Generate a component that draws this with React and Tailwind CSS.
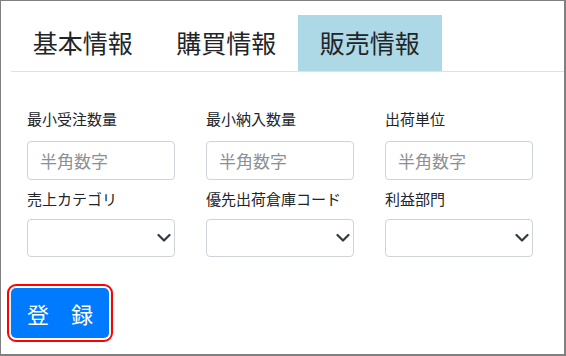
import React from "react";

const font = { fontFamily: '"Noto Sans CJK JP", "Noto Sans", sans-serif' };

function Chevron() {
  return (
    <svg
      className="pointer-events-none absolute right-[4px] top-1/2 -translate-y-1/2"
      width="14"
      height="9"
      viewBox="0 0 14 9"
      fill="none"
    >
      <path d="M1.5 1.5 L7 7 L12.5 1.5" stroke="#343a40" strokeWidth="2.2" strokeLinecap="round" strokeLinejoin="round" />
    </svg>
  );
}

function TextField({ label }) {
  return (
    <div className="flex flex-col">
      <label className="h-[22px] text-[15px] leading-[22px] text-[#212529]">{label}</label>
      <input
        type="text"
        placeholder="半角数字"
        className="mt-[11px] h-[39px] w-[148px] rounded-[4px] border border-[#ced4da] bg-white pl-[12px] text-[17px] text-[#212529] outline-none placeholder:text-[#8a9096]"
        style={font}
      />
    </div>
  );
}

function SelectField({ label }) {
  return (
    <div className="flex flex-col">
      <label className="h-[22px] text-[15px] leading-[22px] text-[#212529]">{label}</label>
      <div className="relative mt-[9px] h-[38px] w-[148px]">
        <select
          className="h-full w-full appearance-none rounded-[4px] border border-[#ced4da] bg-white text-[16px] outline-none"
          style={font}
        >
          <option value=""></option>
        </select>
        <Chevron />
      </div>
    </div>
  );
}

export default function App() {
  const tabs = ["基本情報", "購買情報", "販売情報"];
  return (
    <div
      className="box-border h-[356px] w-[566px] overflow-hidden border-t border-l border-r-2 border-b-2 border-[#808080] bg-white pl-[10px] pt-[14px]"
      style={font}
    >
      <div className="flex h-[57px] border-b border-[#dee2e6]">
        {tabs.map((t, i) => (
          <div
            key={t}
            className={
              "flex h-[56px] w-[143.5px] items-center justify-center text-[25px] text-[#212529] " +
              (i === 2 ? "bg-[#add8e6]" : "")
            }
          >
            {t}
          </div>
        ))}
      </div>

      <div className="pl-[16px] pt-[36px]">
        <div className="grid grid-cols-[148px_148px_148px] gap-x-[31px] gap-y-[8px]">
          <TextField label="最小受注数量" />
          <TextField label="最小納入数量" />
          <TextField label="出荷単位" />
          <SelectField label="売上カテゴリ" />
          <SelectField label="優先出荷倉庫コード" />
          <SelectField label="利益部門" />
        </div>
      </div>

      <div className="pt-[31px]">
        <button
          type="button"
          className="flex h-[50px] w-[98px] items-center justify-center rounded-[5px] bg-[#007bff] text-[22px] text-white outline-2 outline-offset-2 outline-[#ff0000]"
          style={font}
        >
          登　録
        </button>
      </div>
    </div>
  );
}
